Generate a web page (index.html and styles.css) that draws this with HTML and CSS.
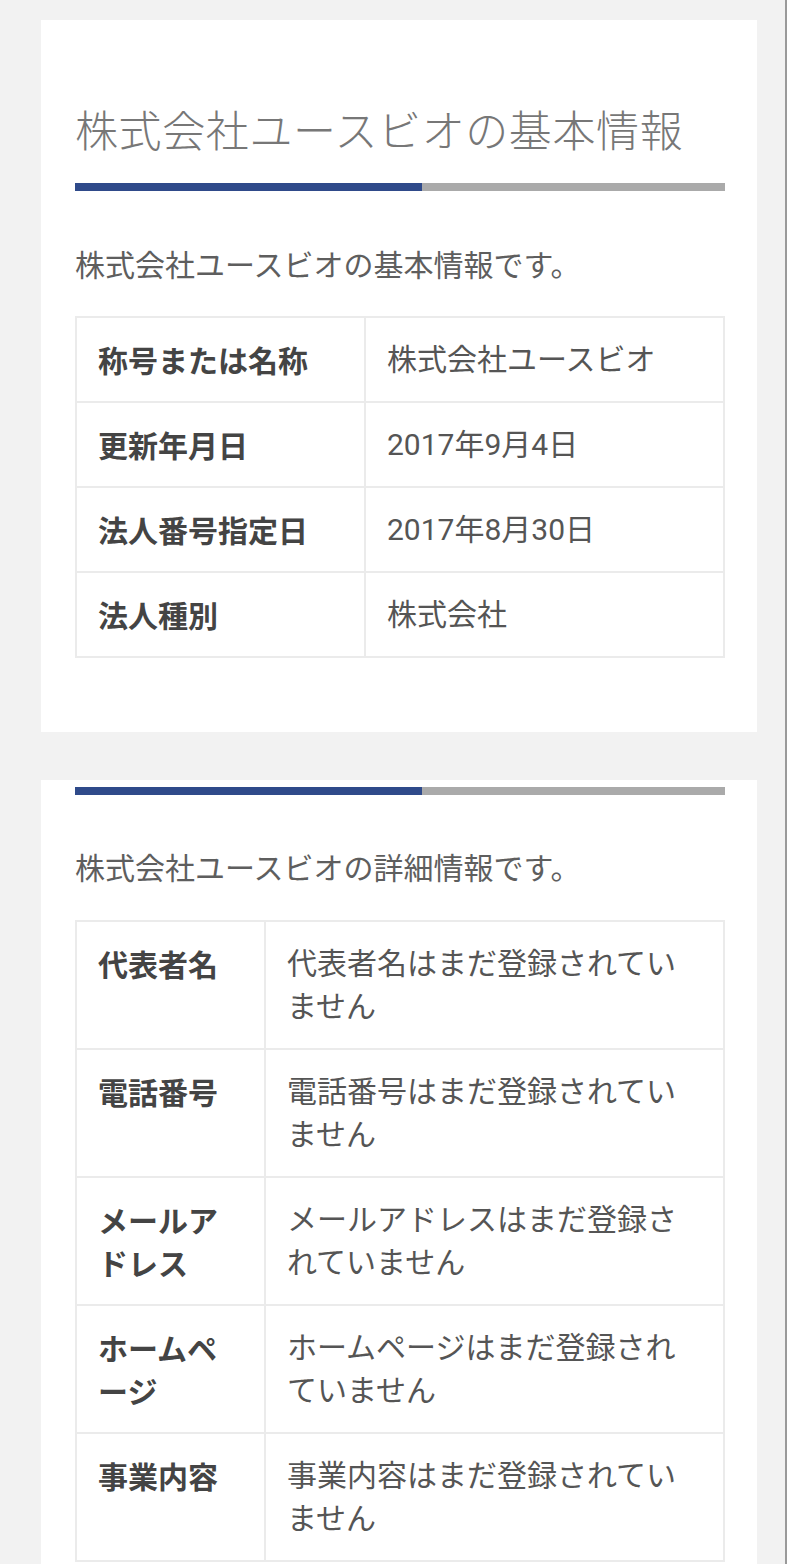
FILE: index.html
```html
<!DOCTYPE html>
<html lang="ja">
<head>
<meta charset="utf-8">
<title>株式会社ユースビオの基本情報</title>
<link rel="stylesheet" href="styles.css">
</head>
<body>
<div class="page">
  <section class="card card-basic">
    <h2 class="title">株式会社ユースビオの基本情報</h2>
    <div class="bar"><span class="bar-fill"></span></div>
    <p class="desc">株式会社ユースビオの基本情報です。</p>
    <table class="info info-basic">
      <colgroup><col class="col-h"><col></colgroup>
      <tr><th>称号または名称</th><td>株式会社ユースビオ</td></tr>
      <tr><th>更新年月日</th><td>2017年9月4日</td></tr>
      <tr><th>法人番号指定日</th><td>2017年8月30日</td></tr>
      <tr><th>法人種別</th><td>株式会社</td></tr>
    </table>
  </section>
  <section class="card card-detail">
    <div class="bar"><span class="bar-fill"></span></div>
    <p class="desc">株式会社ユースビオの詳細情報です。</p>
    <table class="info info-detail">
      <colgroup><col class="col-h"><col></colgroup>
      <tr><th>代表者名</th><td>代表者名はまだ登録されていません</td></tr>
      <tr><th>電話番号</th><td>電話番号はまだ登録されていません</td></tr>
      <tr><th>メールアドレス</th><td>メールアドレスはまだ登録されていません</td></tr>
      <tr><th>ホームページ</th><td>ホームページはまだ登録されていません</td></tr>
      <tr><th>事業内容</th><td>事業内容はまだ登録されていません</td></tr>
    </table>
  </section>
</div>
<div class="edge"></div>
</body>
</html>
```

FILE: styles.css
```css
html, body {
  margin: 0;
  padding: 0;
}
body {
  display: flex;
  background: #ffffff;
  font-family: Roboto, "Noto Sans CJK JP", sans-serif;
  color: #555555;
  min-height: 1564px;
  overflow: hidden;
}
.page {
  flex: 0 0 785px;
  background: #f2f2f2;
  padding: 20px 0 0 41px;
  box-sizing: border-box;
  display: flex;
  flex-direction: column;
  gap: 48px;
}
.edge {
  flex: 0 0 2px;
  background: #9a9a9a;
}
.card {
  width: 716px;
  box-sizing: border-box;
  background: #ffffff;
  padding: 0 32px 74px 34px;
}
.card-basic {
  padding-top: 78px;
}
.card-detail {
  padding-top: 7px;
}
.title {
  margin: 0 0 25px;
  font-family: "Noto Sans CJK JP", sans-serif;
  font-size: 43px;
  line-height: 60px;
  font-weight: 300;
  letter-spacing: 0.6px;
  color: #777777;
  white-space: nowrap;
}
.bar {
  height: 8px;
  background: #aaaaaa;
  display: flex;
}
.bar-fill {
  width: 347px;
  background: #2f4a8a;
}
.desc {
  margin: 51px 0 31px;
  font-family: "Noto Sans CJK JP", sans-serif;
  font-size: 30px;
  line-height: 43px;
  color: #5e5e5e;
}
.card-detail .desc {
  margin-top: 50px;
  margin-bottom: 32px;
}
.info {
  width: 100%;
  border-collapse: collapse;
  table-layout: fixed;
  border: 2px solid #ebebeb;
}
.info th, .info td {
  border: 2px solid #ebebeb;
  padding: 20px 20px 20px 21px;
  font-size: 30px;
  line-height: 43px;
  text-align: left;
  vertical-align: top;
}
.info th {
  font-family: "Noto Sans CJK JP", sans-serif;
  font-weight: 700;
  color: #444444;
}
.info td {
  color: #555555;
}
.info-basic .col-h {
  width: 289px;
}
.info-detail .col-h {
  width: 189px;
}
```
